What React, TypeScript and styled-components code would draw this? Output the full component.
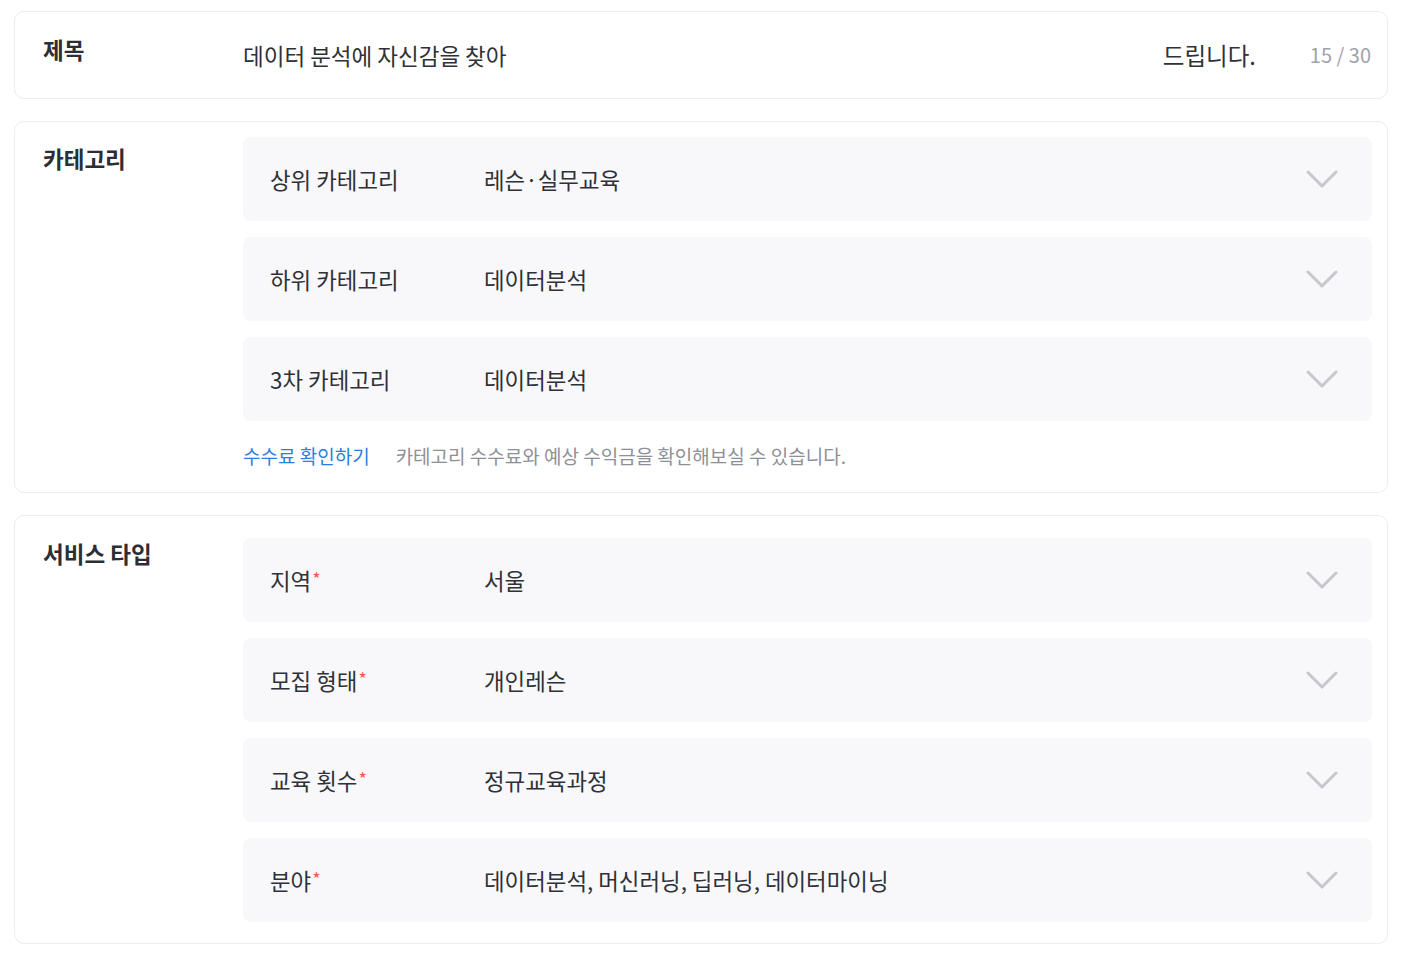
import React from 'react';
import styled, { createGlobalStyle } from 'styled-components';

const GlobalStyle = createGlobalStyle`
  html, body {
    margin: 0;
    padding: 0;
    background: #ffffff;
  }
  body {
    font-family: 'Noto Sans CJK KR', 'Noto Sans', sans-serif;
    color: #2e3137;
  }
`;

const Page = styled.div`
  display: flex;
  flex-direction: column;
  gap: 22px;
  padding: 11px 16px 18px 14px;
`;

const Card = styled.section<{ pad: string }>`
  display: flex;
  align-items: flex-start;
  border: 1px solid #ececf0;
  border-radius: 10px;
  background: #fff;
  padding: ${(props) => props.pad};
`;

const SectionLabel = styled.div<{ top: number }>`
  flex: 0 0 200px;
  padding-left: 28px;
  padding-top: ${(props) => props.top}px;
  font-size: 22.5px;
  font-weight: 700;
  color: #2b2e34;
  line-height: 30px;
`;

const Body = styled.div`
  flex: 1;
  display: flex;
  flex-direction: column;
  gap: 16px;
`;

const TitleRow = styled.div`
  flex: 1;
  display: flex;
  align-items: center;
  font-size: 22.5px;
  line-height: 30px;
  color: #2e3137;
  padding: 28px 0 28px;
`;

const TitleText = styled.span`
  flex: 1;
`;

const TitleEnd = styled.span`
  font-size: 23.5px;
  margin-right: 54px;
`;

const Counter = styled.span`
  font-size: 20px;
  color: #a0a2aa;
  margin-right: 1px;
`;

const SelectRow = styled.div`
  display: flex;
  align-items: center;
  height: 84px;
  border-radius: 8px;
  background: #f8f8fb;
  padding: 0 34px 0 27px;
  font-size: 22.4px;
  color: #2e3137;
`;

const SelectLabel = styled.span`
  flex: 0 0 214px;
`;

const Required = styled.span`
  color: #f5554a;
  font-size: 18px;
  vertical-align: 4px;
  margin-left: 1px;
`;

const SelectValue = styled.span`
  flex: 1;
`;

const Helper = styled.div`
  display: flex;
  align-items: center;
  gap: 26px;
  padding-top: 5px;
  font-size: 19px;
  line-height: 28px;
`;

const HelperLink = styled.a`
  color: #2b7de3;
  text-decoration: none;
`;

const HelperText = styled.span`
  color: #8e9098;
`;

const Chevron = () => (
  <svg width="32" height="18" viewBox="0 0 32 18" fill="none">
    <polyline
      points="2,2 16,16 30,2"
      stroke="#c6c8ce"
      strokeWidth="3"
      strokeLinecap="round"
      strokeLinejoin="round"
    />
  </svg>
);

type Item = { label: string; value: string; required?: boolean };

const categories: Item[] = [
  { label: '상위 카테고리', value: '레슨·실무교육' },
  { label: '하위 카테고리', value: '데이터분석' },
  { label: '3차 카테고리', value: '데이터분석' },
];

const services: Item[] = [
  { label: '지역', value: '서울', required: true },
  { label: '모집 형태', value: '개인레슨', required: true },
  { label: '교육 횟수', value: '정규교육과정', required: true },
  { label: '분야', value: '데이터분석, 머신러닝, 딥러닝, 데이터마이닝', required: true },
];

const Select = ({ label, value, required }: Item) => (
  <SelectRow>
    <SelectLabel>
      {label}
      {required && <Required>*</Required>}
    </SelectLabel>
    <SelectValue>{value}</SelectValue>
    <Chevron />
  </SelectRow>
);

export default function App() {
  return (
    <>
      <GlobalStyle />
      <Page>
        <Card pad="0 15px 0 0">
          <SectionLabel top={22}>제목</SectionLabel>
          <TitleRow>
            <TitleText>데이터 분석에 자신감을 찾아</TitleText>
            <TitleEnd>드립니다.</TitleEnd>
            <Counter>15 / 30</Counter>
          </TitleRow>
        </Card>
        <Card pad="15px 15px 22px 0">
          <SectionLabel top={6}>카테고리</SectionLabel>
          <Body>
            {categories.map((c) => (
              <Select key={c.label} {...c} />
            ))}
            <Helper>
              <HelperLink href="#">수수료 확인하기</HelperLink>
              <HelperText>카테고리 수수료와 예상 수익금을 확인해보실 수 있습니다.</HelperText>
            </Helper>
          </Body>
        </Card>
        <Card pad="22px 15px 21px 0">
          <SectionLabel top={0}>서비스 타입</SectionLabel>
          <Body>
            {services.map((s) => (
              <Select key={s.label} {...s} />
            ))}
          </Body>
        </Card>
      </Page>
    </>
  );
}
